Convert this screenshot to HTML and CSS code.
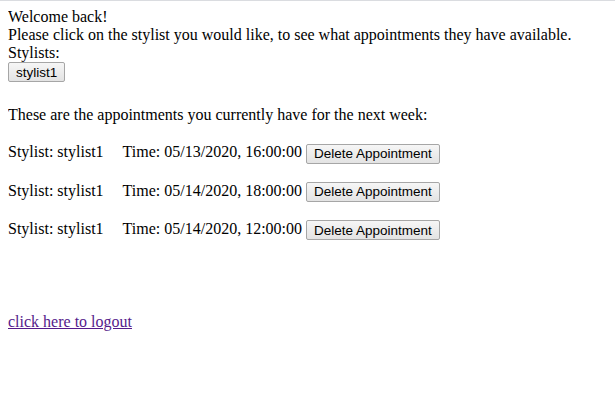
FILE: index.html
```html
<!DOCTYPE html>
<html>
<head>
<meta charset="utf-8">
<link rel="stylesheet" href="styles.css">
</head>
<body>
<div class="topline"></div>
<div class="welcome">Welcome back!</div>
<div>Please click on the stylist you would like, to see what appointments they have available.</div>
<div>Stylists:</div>
<div class="stylists"><button class="btn">stylist1</button></div>
<p class="intro">These are the appointments you currently have for the next week:</p>
<p class="row"><span class="stylist">Stylist: stylist1</span><span>Time: 05/13/2020, 16:00:00</span> <button class="btn">Delete Appointment</button></p>
<p class="row"><span class="stylist">Stylist: stylist1</span><span>Time: 05/14/2020, 18:00:00</span> <button class="btn">Delete Appointment</button></p>
<p class="row"><span class="stylist">Stylist: stylist1</span><span>Time: 05/14/2020, 12:00:00</span> <button class="btn">Delete Appointment</button></p>
<a class="logout" href="#">click here to logout</a>
</body>
</html>
```
FILE: styles.css
```css
html, body {
  background: #fff;
}
body {
  margin: 8px;
  font-family: "Liberation Serif", "Times New Roman", serif;
  font-size: 16px;
  color: #000;
}
.topline {
  position: absolute;
  left: 0;
  top: 0;
  width: 100%;
  height: 1px;
  background: #dadce0;
}
.btn {
  font-family: "Liberation Sans", Arial, sans-serif;
  font-size: 13.5px;
  height: 20px;
  padding: 0 7px;
  border: 1px solid #a6a6a6;
  border-radius: 2px;
  background: linear-gradient(#f6f6f6, #e3e3e3);
  color: #000;
  margin: 0;
  vertical-align: middle;
}
.stylists {
  margin-bottom: 24px;
}
.intro {
  margin: 0 0 17px 0;
}
.row {
  margin: 0 0 16px 0;
  line-height: 22px;
}
.stylist {
  margin-right: 19px;
}
.logout {
  display: inline-block;
  margin-top: 57px;
  color: #551a8b;
}
```
